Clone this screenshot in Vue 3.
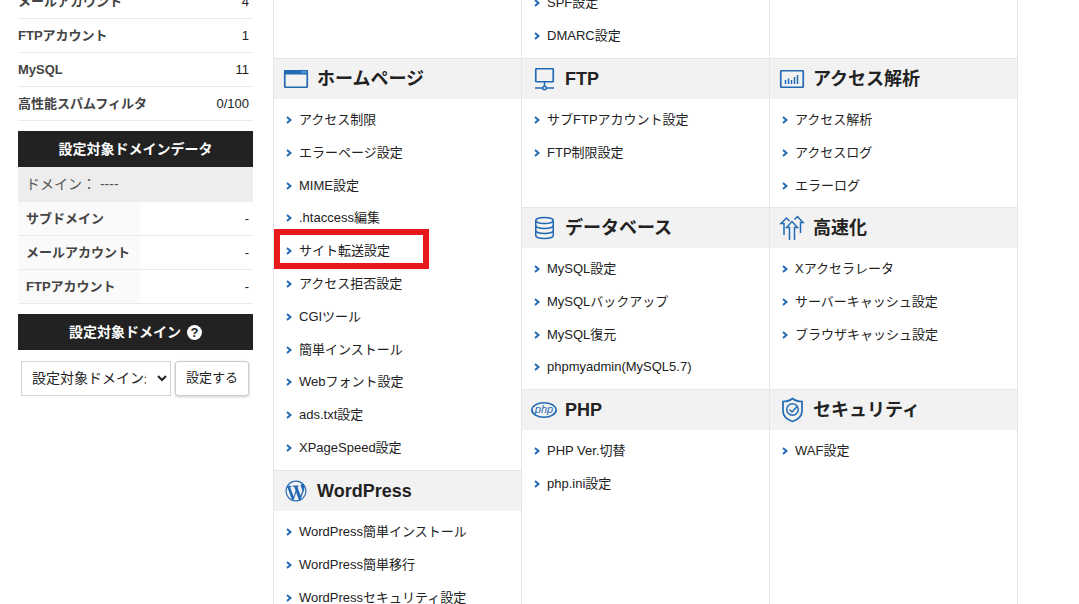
<script setup>
import { ref } from 'vue'

const usage = [
  { label: 'メールアカウント', value: '4' },
  { label: 'FTPアカウント', value: '1' },
  { label: 'MySQL', value: '11' },
  { label: '高性能スパムフィルタ', value: '0/100' },
]

const domainData = [
  { label: 'サブドメイン', value: '-' },
  { label: 'メールアカウント', value: '-' },
  { label: 'FTPアカウント', value: '-' },
]

const target = ref('none')

const cells = [
  { area: 'top1', sections: [] },
  { area: 'top2', sections: [{ items: ['SPF設定', 'DMARC設定'] }] },
  { area: 'top3', sections: [] },
  {
    area: 'site',
    sections: [
      {
        title: 'ホームページ',
        icon: 'window',
        items: [
          'アクセス制限',
          'エラーページ設定',
          'MIME設定',
          '.htaccess編集',
          'サイト転送設定',
          'アクセス拒否設定',
          'CGIツール',
          '簡単インストール',
          'Webフォント設定',
          'ads.txt設定',
          'XPageSpeed設定',
        ],
      },
      {
        title: 'WordPress',
        icon: 'wordpress',
        items: ['WordPress簡単インストール', 'WordPress簡単移行', 'WordPressセキュリティ設定'],
      },
    ],
  },
  {
    area: 'ftp',
    sections: [{ title: 'FTP', icon: 'ftp', items: ['サブFTPアカウント設定', 'FTP制限設定'] }],
  },
  {
    area: 'access',
    sections: [
      { title: 'アクセス解析', icon: 'chart', items: ['アクセス解析', 'アクセスログ', 'エラーログ'] },
    ],
  },
  {
    area: 'db',
    sections: [
      {
        title: 'データベース',
        icon: 'database',
        items: ['MySQL設定', 'MySQLバックアップ', 'MySQL復元', 'phpmyadmin(MySQL5.7)'],
      },
    ],
  },
  {
    area: 'speed',
    sections: [
      {
        title: '高速化',
        icon: 'speed',
        items: ['Xアクセラレータ', 'サーバーキャッシュ設定', 'ブラウザキャッシュ設定'],
      },
    ],
  },
  {
    area: 'php',
    sections: [{ title: 'PHP', icon: 'php', items: ['PHP Ver.切替', 'php.ini設定'] }],
  },
  {
    area: 'security',
    sections: [{ title: 'セキュリティ', icon: 'shield', items: ['WAF設定'] }],
  },
]

const highlighted = 'サイト転送設定'
</script>

<template>
  <div class="page">
    <aside class="sidebar">
      <table class="usage">
        <tbody>
          <tr v-for="row in usage" :key="row.label">
            <th scope="row">{{ row.label }}</th>
            <td>{{ row.value }}</td>
          </tr>
        </tbody>
      </table>

      <h2 class="bar">設定対象ドメインデータ</h2>
      <p class="domain">ドメイン： ----</p>
      <table class="usage shaded">
        <tbody>
          <tr v-for="row in domainData" :key="row.label">
            <th scope="row">{{ row.label }}</th>
            <td>{{ row.value }}</td>
          </tr>
        </tbody>
      </table>

      <h2 class="bar">
        <label for="target-domain">設定対象ドメイン</label>
        <span class="help">?</span>
      </h2>
      <form class="picker" @submit.prevent>
        <select id="target-domain" v-model="target">
          <option value="none">設定対象ドメイン未指定</option>
        </select>
        <button type="submit">設定する</button>
      </form>
    </aside>

    <main class="menu">
      <div v-for="cell in cells" :key="cell.area" class="cell" :class="cell.area">
        <section v-for="(section, i) in cell.sections" :key="i">
          <h2 v-if="section.title" class="heading">
            <svg class="icon" width="26" height="26" viewBox="0 0 26 26" aria-hidden="true">
              <g v-if="section.icon === 'window'">
                <rect x="1.75" y="4.75" width="22.5" height="16.5" rx="0.5" class="frame" />
                <path d="M1 4h24v4.500H1z" class="fill" />
                <path d="M18.500 6h1M20.500 6h1M22.500 6h1" stroke="#fff" />
              </g>
              <g v-else-if="section.icon === 'wordpress'" class="fill">
                <path
                  transform="translate(2.5 2.5) scale(1.05)"
                  d="M20 10c0-5.51-4.49-10-10-10C4.48 0 0 4.49 0 10c0 5.52 4.48 10 10 10 5.51 0 10-4.48 10-10zM7.78 15.37L4.37 6.22c.55-.02 1.17-.08 1.17-.08.5-.06.44-1.13-.06-1.11 0 0-1.45.11-2.37.11-.18 0-.37 0-.58-.01C4.12 2.69 6.87 1.11 10 1.11c2.33 0 4.45.87 6.05 2.34-.68-.11-1.65.39-1.65 1.58 0 .74.45 1.36.9 2.1.35.61.55 1.36.55 2.46 0 1.49-1.4 5-1.4 5l-3.03-8.37c.54-.02.82-.17.82-.17.5-.05.44-1.25-.06-1.22 0 0-1.44.12-2.38.12-.87 0-2.33-.12-2.33-.12-.5-.03-.56 1.2-.06 1.22l.92.08 1.26 3.41zM17.41 10c.24-.64.74-1.87.43-4.25.7 1.29 1.05 2.71 1.05 4.25 0 3.29-1.73 6.24-4.4 7.78.97-2.59 1.94-5.2 2.92-7.78zM6.1 18.09C3.12 16.65 1.11 13.53 1.11 10c0-1.3.23-2.48.72-3.59C3.25 10.3 4.67 14.2 6.1 18.09zm4.03-6.63l2.58 6.98c-.86.29-1.76.45-2.71.45-.79 0-1.57-.11-2.29-.33.81-2.38 1.62-4.74 2.42-7.1z"
                />
              </g>
              <g v-else-if="section.icon === 'ftp'" class="line">
                <rect x="4.75" y="2.75" width="17.5" height="13" rx="0.5" class="frame" />
                <path d="M13.5 16v4M4 22h7.5M15.5 22H23" />
                <circle cx="13.5" cy="22" r="1.75" />
              </g>
              <g v-else-if="section.icon === 'chart'">
                <rect x="1.75" y="4.75" width="22.5" height="16.5" rx="0.5" class="frame" />
                <path d="M6.5 18v-4M9.5 18v-5.5M12.5 18v-4M15.5 18v-7M18.5 18V9" class="line" />
              </g>
              <g v-else-if="section.icon === 'database'" class="line">
                <ellipse cx="13.5" cy="5.5" rx="8.75" ry="3" />
                <path d="M4.75 5.5v15c0 1.7 3.9 3 8.75 3s8.75-1.3 8.75-3v-15" />
                <path d="M4.75 10.5c0 1.7 3.9 3 8.75 3s8.75-1.3 8.75-3M4.75 15.5c0 1.7 3.9 3 8.75 3s8.75-1.3 8.75-3" />
              </g>
              <g v-else-if="section.icon === 'speed'" class="line">
                <path d="M5 20V8.5H2L7.5 3l3 3.300" />
                <path d="M15.500 4.500L18.500 1.500L24 7.500H21.500V18" />
                <path d="M10.500 25V12.500H7.500L13 6.500l5.500 6H15.500V25" />
              </g>
              <g v-else-if="section.icon === 'php'">
                <ellipse cx="13" cy="13" rx="12.100" ry="7.250" class="frame" />
                <text x="13" y="16" text-anchor="middle" class="php-text">php</text>
              </g>
              <g v-else class="line">
                <path
                  class="frame"
                  d="M13.500 1.500C11 3.500 7.500 4.500 4 4.500V14c0 5 4 8.500 9.500 10.500C19 22.500 23 19 23 14V4.500c-3.500 0-7-1-9.500-3z"
                />
                <circle cx="13.500" cy="12.500" r="5.750" />
                <path d="M10.500 12.500l2.500 2.500 5.500-6" />
              </g>
            </svg>
            {{ section.title }}
          </h2>
          <ul class="links">
            <li v-for="item in section.items" :key="item" :class="{ marked: item === highlighted }">
              <a href="#">
                <svg class="chevron" width="6" height="8" viewBox="0 0 6 8" aria-hidden="true">
                  <path d="M1 1l3.500 3L1 7" />
                </svg>
                {{ item }}
              </a>
            </li>
          </ul>
        </section>
      </div>
    </main>
  </div>
</template>

<style>
body {
  margin: 0;
  background: #fff;
}
</style>

<style scoped>
.page {
  display: flex;
  align-items: flex-start;
  gap: 20px;
  box-sizing: border-box;
  height: 100vh;
  padding: 0 61px 0 18px;
  overflow: hidden;
  color: #222;
  font-family: Arial, "Liberation Sans", "Noto Sans CJK JP", sans-serif;
  font-size: 13px;
  line-height: 20px;
}

.sidebar {
  flex: 0 0 235px;
  min-width: 0;
  margin-top: -15px;
}

.usage {
  width: 100%;
  border-collapse: collapse;
}

.usage th,
.usage td {
  height: 33px;
  padding: 0;
  border-bottom: 1px solid #eaeaea;
}

.usage th {
  color: #444;
  text-align: left;
}

.usage td {
  padding-right: 4px;
  text-align: right;
}

.shaded th {
  width: 52%;
  box-sizing: border-box;
  padding-left: 8px;
  background: #fafafa;
}

.bar {
  display: flex;
  align-items: center;
  justify-content: center;
  gap: 6px;
  height: 36px;
  margin: 10px 0 0;
  background: #222;
  color: #fff;
  font-size: 14px;
}

.help {
  width: 15px;
  height: 15px;
  border-radius: 50%;
  background: #fff;
  color: #222;
  font-size: 13px;
  line-height: 15px;
  text-align: center;
}

.domain {
  margin: 0;
  padding: 0 8px;
  background: #ededed;
  color: #555;
  font-size: 14px;
  line-height: 35px;
}

.picker {
  display: flex;
  gap: 4px;
  padding: 11px 4px 0 3px;
}

.picker select,
.picker button {
  box-sizing: border-box;
  height: 35px;
  background: #fff;
  color: #222;
  font-family: inherit;
}

.picker select {
  flex: 1;
  min-width: 0;
  padding: 0 8px 2px 6px;
  border: 1px solid #ced6de;
  border-radius: 0;
  font-size: 14px;
}

.picker button {
  flex: none;
  width: 74px;
  padding: 0 0 2px;
  border: 1px solid #c8cccc;
  border-radius: 3px;
  box-shadow: 0 1px 3px rgba(0, 0, 0, 0.2);
  font-size: 13px;
  line-height: 20px;
}

.menu {
  display: grid;
  flex: 1;
  grid-template-areas:
    "top1 top2 top3"
    "site ftp access"
    "site db speed"
    "site php security";
  grid-template-columns: repeat(3, 1fr);
  grid-template-rows: auto auto auto 1fr;
  margin-top: -18px;
  border-right: 1px solid #e6e6e6;
}

.cell {
  min-width: 0;
  border-left: 1px solid #e6e6e6;
}

.top1 { grid-area: top1; }
.top2 { grid-area: top2; }
.top3 { grid-area: top3; }
.site { grid-area: site; }
.ftp { grid-area: ftp; }
.access { grid-area: access; }
.db { grid-area: db; }
.speed { grid-area: speed; }
.php { grid-area: php; }
.security { grid-area: security; }

.heading {
  display: flex;
  align-items: center;
  gap: 8px;
  height: 40px;
  margin: 0;
  padding-left: 9px;
  border-top: 1px solid #e6e6e6;
  background: #f2f2f2;
  font-size: 18px;
}

.icon {
  flex: none;
}

.line,
.frame {
  fill: none;
  stroke: #226ab3;
  stroke-width: 1.5;
}

.frame {
  stroke-width: 1.7;
}

.fill {
  fill: #226ab3;
}

.php-text {
  fill: #226ab3;
  font: italic 11px Arial, "Liberation Sans", sans-serif;
}

.links {
  margin: 0;
  padding: 4px 0 6px;
  list-style: none;
}

.links li {
  position: relative;
  height: 33px;
}

.links li:nth-child(5n + 3) {
  height: 32px;
}

.links a {
  display: flex;
  align-items: center;
  gap: 7px;
  height: 33px;
  padding-left: 12px;
  color: #222;
  text-decoration: none;
}

.chevron {
  fill: none;
  stroke: #226ab3;
  stroke-width: 2;
}

.marked::after {
  position: absolute;
  top: -5px;
  left: 0;
  box-sizing: border-box;
  width: 155px;
  height: 40px;
  border: 6px solid #e8191c;
  content: "";
}
</style>
